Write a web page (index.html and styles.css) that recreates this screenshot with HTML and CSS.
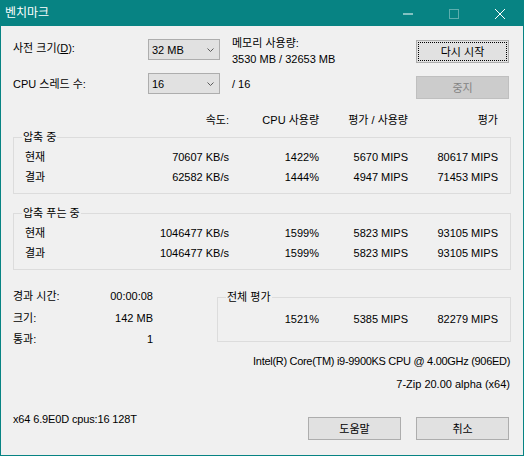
FILE: index.html
```html
<!DOCTYPE html>
<html lang="ko">
<head>
<meta charset="utf-8">
<title>벤치마크</title>
<link rel="stylesheet" href="styles.css">
</head>
<body>
<div class="window">
  <div class="titlebar">
    <span class="title">벤치마크</span>
    <span class="caption">
      <svg width="10" height="10" viewBox="0 0 10 10"><line x1="0" y1="5" x2="10" y2="5" stroke="#fff" stroke-width="1"/></svg>
    </span>
    <span class="caption">
      <svg width="10" height="10" viewBox="0 0 10 10"><rect x="0.5" y="0.5" width="9" height="9" fill="none" stroke="rgba(255,255,255,0.35)" stroke-width="1"/></svg>
    </span>
    <span class="caption">
      <svg width="10" height="10" viewBox="0 0 10 10"><path d="M0 0 L10 10 M10 0 L0 10" stroke="#fff" stroke-width="1"/></svg>
    </span>
  </div>
  <div class="client">
    <div class="settings">
      <div class="lbl r1">사전 크기(<u>D</u>):</div>
      <div class="combo"><span>32 MB</span><svg class="chev" width="7" height="4" viewBox="0 0 7 4"><polyline points="0.5,0.5 3.5,3.5 6.5,0.5" fill="none" stroke="#5a5a5a" stroke-width="1"/></svg></div>
      <div></div>
      <div class="mem"><div>메모리 사용량:</div><div>3530 MB / 32653 MB</div></div>
      <div class="btn default r1b"><span class="focus">다시 시작</span></div>

      <div class="lbl r2">CPU 스레드 수:</div>
      <div class="combo"><span>16</span><svg class="chev" width="7" height="4" viewBox="0 0 7 4"><polyline points="0.5,0.5 3.5,3.5 6.5,0.5" fill="none" stroke="#5a5a5a" stroke-width="1"/></svg></div>
      <div></div>
      <div class="lbl r2">/ 16</div>
      <div class="btn disabled r2b">중지</div>
    </div>

    <div class="headers">
      <div>속도:</div>
      <div>CPU 사용량</div>
      <div>평가 / 사용량</div>
      <div>평가</div>
    </div>

    <fieldset class="group g1">
      <legend>압축 중</legend>
      <div class="rows">
        <div class="rl">현재</div><div class="num">70607 KB/s</div><div class="num">1422%</div><div class="num">5670 MIPS</div><div class="num">80617 MIPS</div>
        <div class="rl">결과</div><div class="num">62582 KB/s</div><div class="num">1444%</div><div class="num">4947 MIPS</div><div class="num">71453 MIPS</div>
      </div>
    </fieldset>

    <fieldset class="group g2">
      <legend>압축 푸는 중</legend>
      <div class="rows">
        <div class="rl">현재</div><div class="num">1046477 KB/s</div><div class="num">1599%</div><div class="num">5823 MIPS</div><div class="num">93105 MIPS</div>
        <div class="rl">결과</div><div class="num">1046477 KB/s</div><div class="num">1599%</div><div class="num">5823 MIPS</div><div class="num">93105 MIPS</div>
      </div>
    </fieldset>

    <div class="summary">
      <div class="stats">
        <div>경과 시간:</div><div class="num">00:00:08</div>
        <div>크기:</div><div class="num">142 MB</div>
        <div>통과:</div><div class="num">1</div>
      </div>
      <fieldset class="group total">
        <legend>전체 평가</legend>
        <div class="rows3">
          <div class="num">1521%</div><div class="num">5385 MIPS</div><div class="num">82279 MIPS</div>
        </div>
      </fieldset>
    </div>

    <div class="info first">Intel(R) Core(TM) i9-9900KS CPU @ 4.00GHz (906ED)</div>
    <div class="info">7-Zip 20.00 alpha (x64)</div>

    <div class="footer">
      <span class="build">x64 6.9E0D cpus:16 128T</span>
      <div class="btn fb">도움말</div>
      <div class="btn fb">취소</div>
    </div>
  </div>
</div>
</body>
</html>
```

FILE: styles.css
```css
html, body {
  margin: 0;
  padding: 0;
}

body {
  font-family: "Liberation Sans", "Noto Sans CJK KR", sans-serif;
  font-size: 11px;
  color: #000;
  background: #f0f0f0;
}

.window {
  width: 524px;
  height: 456px;
  box-sizing: border-box;
  border: 1px solid #078383;
  background: #f0f0f0;
  overflow: hidden;
}

.titlebar {
  height: 25px;
  background: #078383;
  display: flex;
  align-items: center;
  color: #fff;
}

.title {
  flex: 1;
  font-size: 12px;
  line-height: 25px;
  padding-left: 4px;
}

.caption {
  width: 46px;
  height: 25px;
  display: flex;
  align-items: center;
  justify-content: center;
}

.caption svg {
  display: block;
}

.client {
  padding: 13px 0 0 12px;
}

/* top settings */
.settings {
  display: grid;
  grid-template-columns: 135px 72px 12px 184px 93px;
  grid-template-rows: 34px 39px;
  align-items: start;
}

.lbl {
  line-height: 16px;
}

.lbl.r1 {
  margin-top: 1px;
}

.lbl.r2 {
  margin-top: 3px;
}

.combo {
  height: 21px;
  box-sizing: border-box;
  border: 1px solid #adadad;
  background: #e1e1e1;
  display: flex;
  align-items: center;
  justify-content: space-between;
  padding: 0 5px 0 3px;
  line-height: 16px;
}

.chev {
  display: block;
}

.mem {
  margin-top: -4px;
  line-height: 16px;
}

.btn {
  width: 93px;
  height: 23px;
  box-sizing: border-box;
  border: 1px solid #adadad;
  background: #e1e1e1;
  display: flex;
  align-items: center;
  justify-content: center;
  line-height: 16px;
}

.btn.default {
  padding: 1px;
  align-items: stretch;
}

.focus {
  flex: 1;
  border: 1px dotted #000;
  display: flex;
  align-items: center;
  justify-content: center;
}

.btn.disabled {
  background: #cccccc;
  border-color: #bfbfbf;
  color: #838383;
}

.r1b {
  margin-top: 1px;
}

.r2b {
  margin-top: 3px;
}

/* column headers */
.headers {
  display: grid;
  grid-template-columns: 216px 90px 89px 90px;
  line-height: 16px;
  text-align: right;
}

/* group boxes */
.group {
  margin: 0;
  border: 1px solid #dcdcdc;
  padding: 2px 0 6px 8px;
  box-sizing: border-box;
  width: 498px;
  min-inline-size: 0;
}

.group legend {
  padding: 0 1px;
  line-height: 16px;
}

.g1 {
  margin-top: 1px;
}

.g2 {
  margin-top: 11px;
}

.rows {
  display: grid;
  grid-template-columns: 60px 147px 90px 89px 90px;
  line-height: 20px;
}

.rl {
  padding-left: 3px;
}

.num {
  text-align: right;
}

/* summary */
.summary {
  display: flex;
  align-items: flex-start;
  margin-top: 16px;
}

.stats {
  display: grid;
  grid-template-columns: 70px 70px;
  line-height: 21.5px;
}

.group.total {
  margin: 3px 0 0 64px;
  width: 294px;
  padding: 4px 0 12px 8px;
}

.rows3 {
  display: grid;
  grid-template-columns: 93px 89px 90px;
  line-height: 20px;
}

.info {
  width: 497px;
  text-align: right;
  line-height: 23px;
}

.info.first {
  margin-top: -1px;
  letter-spacing: -0.3px;
}

.footer {
  display: flex;
  align-items: flex-start;
  width: 496px;
  margin-top: 15.5px;
  gap: 15px;
}

.build {
  flex: 1;
  line-height: 16px;
  letter-spacing: -0.15px;
}

.btn.fb {
  margin-top: 6px;
}
```
